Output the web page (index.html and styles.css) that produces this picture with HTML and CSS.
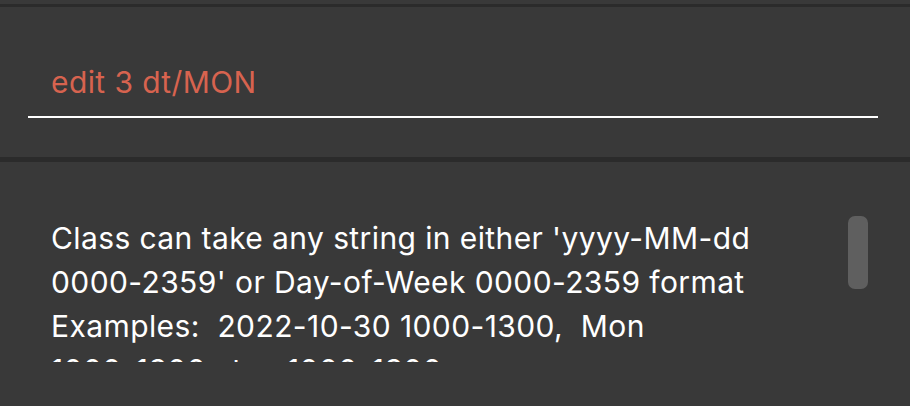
FILE: index.html
```html
<!DOCTYPE html>
<html>
<head>
<meta charset="utf-8">
<link rel="stylesheet" href="styles.css">
</head>
<body>
<div class="app">
  <div class="prev-panel"></div>
  <div class="divider thin"></div>
  <section class="command-panel">
    <div class="command-box">
      <span class="command-text">edit 3 dt/MON</span>
    </div>
  </section>
  <div class="divider thick"></div>
  <section class="result-panel">
    <div class="result-scroll">
      <p class="result-text">Class can take any string in either 'yyyy-MM-dd<br>0000-2359' or Day-of-Week 0000-2359 format<br>Examples:&nbsp; 2022-10-30 1000-1300,&nbsp; Mon<br>1000-1300,&nbsp; tue 1000-1300</p>
    </div>
    <div class="scroll-thumb"></div>
  </section>
</div>
</body>
</html>
```
FILE: styles.css
```css
html, body {
  margin: 0;
  padding: 0;
  background: #393939;
  height: 100%;
  overflow: hidden;
}
.app {
  display: flex;
  flex-direction: column;
  height: 406px;
  font-family: Inter, "Liberation Sans", Arial, sans-serif;
}
.prev-panel {
  height: 4px;
  background: #393939;
}
.divider {
  background: #2b2b2b;
}
.divider.thin { height: 3px; }
.divider.thick { height: 5px; }
.command-panel {
  height: 150px;
  padding: 0 32px 0 28px;
  display: flex;
  flex-direction: column;
}
.command-box {
  margin-top: 55px;
  height: 54px;
  border-bottom: 2px solid #ffffff;
  padding-left: 23px;
}
.command-text {
  display: block;
  color: #d7634f;
  font-size: 30px;
  line-height: 40px;
  letter-spacing: 0.4px;
}
.result-panel {
  position: relative;
  flex: 1;
  padding: 54px 0 0 51px;
}
.result-scroll {
  height: 146px;
  overflow: hidden;
  width: 780px;
}
.result-text {
  margin: 0;
  color: #ffffff;
  font-size: 30px;
  line-height: 44px;
  letter-spacing: 0.4px;
}
.scroll-thumb {
  position: absolute;
  left: 848px;
  top: 54px;
  width: 20px;
  height: 73px;
  border-radius: 7px;
  background: #5f5f5f;
}
```
